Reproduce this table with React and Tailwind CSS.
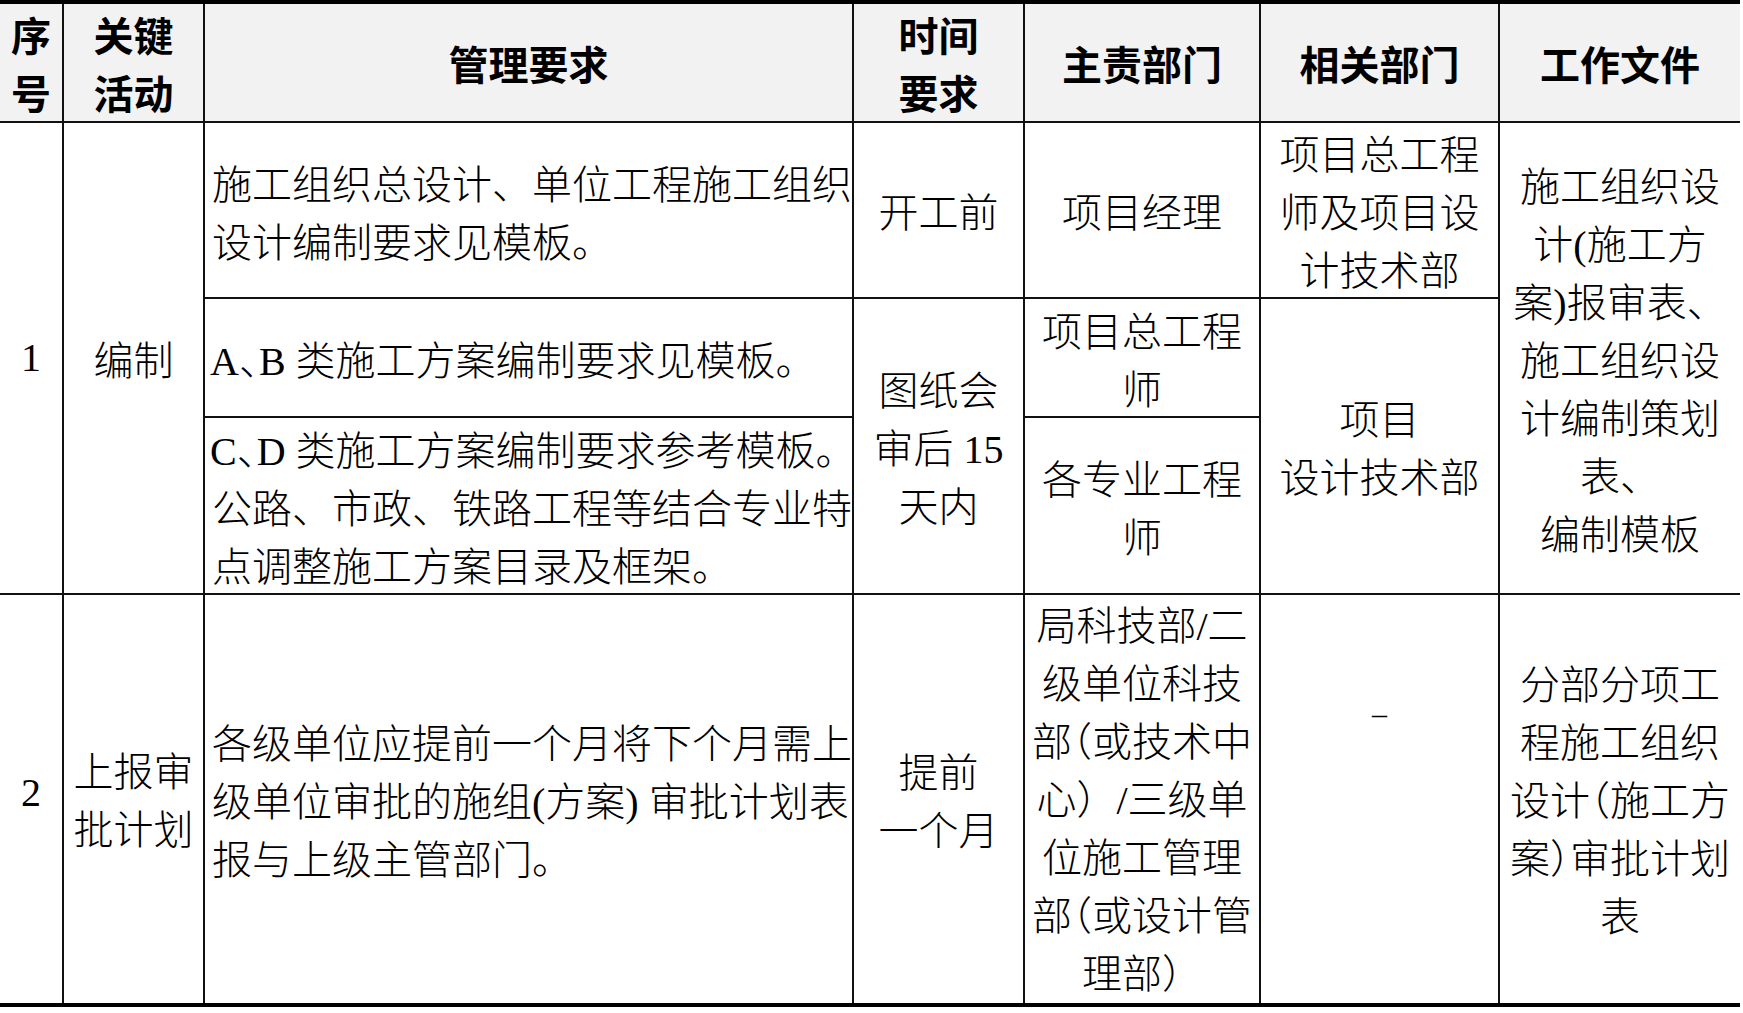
import React from "react";

function L({ lines }) {
  return (
    <div>
      {lines.map((l, i) => (
        <div key={i}>{l}</div>
      ))}
    </div>
  );
}

const H = ({ children }) => (
  <span className="[font-feature-settings:'halt']">{children}</span>
);

export default function App() {
  return (
    <div className="w-[1743px] h-[1013px] bg-white text-black text-[40px] leading-[58px] font-light font-['Liberation_Serif','Noto_Sans_CJK_SC',serif]">
      <div className="grid w-[1740px] grid-cols-[64px_141px_649px_171px_236px_239px_240px] grid-rows-[119px_176px_119px_177px_408px] border-t-4 border-b-4 border-black">
        {/* header */}
        <div className="col-start-1 row-start-1 flex items-center justify-center pt-[9px] text-center whitespace-nowrap bg-[#f2f2f2] font-bold border-r-2 border-b-2 border-[#111]">
          <L lines={["序", "号"]} />
        </div>
        <div className="col-start-2 row-start-1 flex items-center justify-center pt-[9px] text-center whitespace-nowrap bg-[#f2f2f2] font-bold border-r-2 border-b-2 border-[#111]">
          <L lines={["关键", "活动"]} />
        </div>
        <div className="col-start-3 row-start-1 flex items-center justify-center pt-[9px] text-center whitespace-nowrap bg-[#f2f2f2] font-bold border-r-2 border-b-2 border-[#111]">
          管理要求
        </div>
        <div className="col-start-4 row-start-1 flex items-center justify-center pt-[9px] text-center whitespace-nowrap bg-[#f2f2f2] font-bold border-r-2 border-b-2 border-[#111]">
          <L lines={["时间", "要求"]} />
        </div>
        <div className="col-start-5 row-start-1 flex items-center justify-center pt-[9px] text-center whitespace-nowrap bg-[#f2f2f2] font-bold border-r-2 border-b-2 border-[#111]">
          主责部门
        </div>
        <div className="col-start-6 row-start-1 flex items-center justify-center pt-[9px] text-center whitespace-nowrap bg-[#f2f2f2] font-bold border-r-2 border-b-2 border-[#111]">
          相关部门
        </div>
        <div className="col-start-7 row-start-1 flex items-center justify-center pt-[9px] text-center whitespace-nowrap bg-[#f2f2f2] font-bold border-b-2 border-[#111]">
          工作文件
        </div>

        {/* row 1 */}
        <div className="col-start-1 row-start-2 row-span-3 flex items-center justify-center text-center whitespace-nowrap border-r-2 border-b-2 border-[#111]">
          1
        </div>
        <div className="col-start-2 row-start-2 row-span-3 flex items-center justify-center pt-[8px] text-center whitespace-nowrap border-r-2 border-b-2 border-[#111]">
          编制
        </div>
        <div className="col-start-3 row-start-2 flex items-center justify-start pl-[7px] pt-[9px] text-left whitespace-nowrap border-r-2 border-b-2 border-[#111]">
          <L lines={["施工组织总设计、单位工程施工组织", "设计编制要求见模板。"]} />
        </div>
        <div className="col-start-3 row-start-3 flex items-center justify-start pl-[5px] pt-[8px] text-left whitespace-nowrap border-r-2 border-b-2 border-[#111]">
          <div>
            A<H>、</H>B 类施工方案编制要求见模板。
          </div>
        </div>
        <div className="col-start-3 row-start-4 flex items-center justify-start pl-[5px] pt-[8px] text-left whitespace-nowrap border-r-2 border-b-2 border-[#111]">
          <div>
            <div>
              C<H>、</H>D 类施工方案编制要求参考模板。
            </div>
            <div className="pl-[2px]">公路、市政、铁路工程等结合专业特</div>
            <div className="pl-[2px]">点调整施工方案目录及框架。</div>
          </div>
        </div>
        <div className="col-start-4 row-start-2 flex items-center justify-center pt-[8px] text-center whitespace-nowrap border-r-2 border-b-2 border-[#111]">
          开工前
        </div>
        <div className="col-start-4 row-start-3 row-span-2 flex items-center justify-center pt-[8px] text-center whitespace-nowrap border-r-2 border-b-2 border-[#111]">
          <L lines={["图纸会", "审后 15", "天内"]} />
        </div>
        <div className="col-start-5 row-start-2 flex items-center justify-center pt-[8px] text-center whitespace-nowrap border-r-2 border-b-2 border-[#111]">
          项目经理
        </div>
        <div className="col-start-5 row-start-3 flex items-center justify-center pt-[8px] text-center whitespace-nowrap border-r-2 border-b-2 border-[#111]">
          <L lines={["项目总工程", "师"]} />
        </div>
        <div className="col-start-5 row-start-4 flex items-center justify-center pt-[8px] text-center whitespace-nowrap border-r-2 border-b-2 border-[#111]">
          <L lines={["各专业工程", "师"]} />
        </div>
        <div className="col-start-6 row-start-2 flex items-center justify-center pt-[8px] text-center whitespace-nowrap border-r-2 border-b-2 border-[#111]">
          <L lines={["项目总工程", "师及项目设", "计技术部"]} />
        </div>
        <div className="col-start-6 row-start-3 row-span-2 flex items-center justify-center pt-[8px] text-center whitespace-nowrap border-r-2 border-b-2 border-[#111]">
          <L lines={["项目", "设计技术部"]} />
        </div>
        <div className="col-start-7 row-start-2 row-span-3 flex items-center justify-center pt-[8px] text-center whitespace-nowrap border-b-2 border-[#111]">
          <L
            lines={[
              "施工组织设",
              "计(施工方",
              "案)报审表、",
              "施工组织设",
              "计编制策划",
              "表、",
              "编制模板",
            ]}
          />
        </div>

        {/* row 2 */}
        <div className="col-start-1 row-start-5 flex items-center justify-center pb-[12px] text-center whitespace-nowrap border-r-2 border-[#111]">
          2
        </div>
        <div className="col-start-2 row-start-5 flex items-center justify-center pt-[6px] text-center whitespace-nowrap border-r-2 border-[#111]">
          <L lines={["上报审", "批计划"]} />
        </div>
        <div className="col-start-3 row-start-5 flex items-center justify-start pl-[7px] pt-[7px] text-left whitespace-nowrap border-r-2 border-[#111]">
          <L
            lines={[
              "各级单位应提前一个月将下个月需上",
              "级单位审批的施组(方案) 审批计划表",
              "报与上级主管部门。",
            ]}
          />
        </div>
        <div className="col-start-4 row-start-5 flex items-center justify-center pt-[8px] text-center whitespace-nowrap border-r-2 border-[#111]">
          <L lines={["提前", "一个月"]} />
        </div>
        <div className="col-start-5 row-start-5 flex items-center justify-center pt-[4px] text-center whitespace-nowrap border-r-2 border-[#111]">
          <div>
            <div>局科技部/二</div>
            <div>级单位科技</div>
            <div>
              部<H>（</H>或技术中
            </div>
            <div>心）/三级单</div>
            <div>位施工管理</div>
            <div>
              部<H>（</H>或设计管
            </div>
            <div>理部）</div>
          </div>
        </div>
        <div className="col-start-6 row-start-5 flex items-center justify-center text-center whitespace-nowrap border-r-2 border-[#111]">
          <div className="pb-[174px]">
            <span className="text-[30px]">–</span>
          </div>
        </div>
        <div className="col-start-7 row-start-5 flex items-center justify-center pt-[6px] text-center whitespace-nowrap">
          <div>
            <div>分部分项工</div>
            <div>程施工组织</div>
            <div>
              设计<H>（</H>施工方
            </div>
            <div>
              案<H>）</H>审批计划
            </div>
            <div>表</div>
          </div>
        </div>
      </div>
    </div>
  );
}
